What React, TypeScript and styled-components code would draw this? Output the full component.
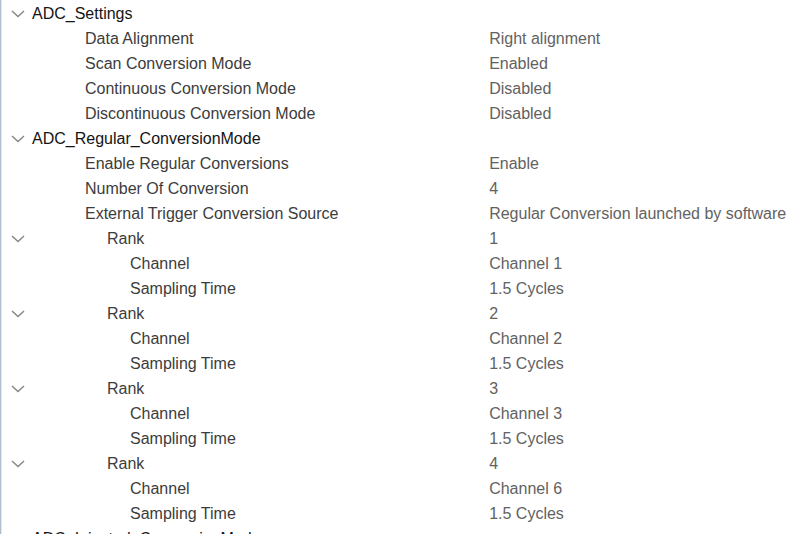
import React, { useState } from "react";
import styled, { createGlobalStyle } from "styled-components";

const GlobalStyle = createGlobalStyle`
  * { box-sizing: border-box; }
  body {
    margin: 0;
    background: #ffffff;
    font-family: "Liberation Sans", Arial, sans-serif;
    font-size: 16px;
    line-height: 25px;
  }
`;

const Panel = styled.main`
  height: 100vh;
  overflow: hidden;
  padding-top: 1px;
  border-left: 1px solid #b0bfcd;
  box-shadow: inset 1px 0 0 #e3e9ee;
`;

const Tree = styled.table`
  width: 100%;
  table-layout: fixed;
  border-collapse: collapse;
`;

const ToggleColumn = styled.col`
  width: 31px;
`;

const NameColumn = styled.col`
  width: 57%;
`;

const Row = styled.tr`
  height: 25px;
`;

const ToggleCell = styled.td`
  padding: 0 0 0 9px;
`;

const Toggle = styled.button<{ $open: boolean }>`
  display: flex;
  align-items: center;
  justify-content: center;
  width: 16px;
  height: 25px;
  padding: 0;
  border: 0;
  background: none;
  color: #858585;

  svg {
    transform: rotate(${({ $open }) => ($open ? "0deg" : "-90deg")});
  }
`;

const indents = [0, 53, 75, 98];

const NameCell = styled.th<{ $level: number }>`
  padding: 0 0 0 ${({ $level }) => indents[$level]}px;
  color: ${({ $level }) => ($level === 0 ? "#141414" : "#3c3c3c")};
  font-weight: 400;
  text-align: left;
  white-space: nowrap;
`;

const ValueCell = styled.td`
  padding: 0 0 0 4px;
  color: #626262;
  white-space: nowrap;
`;

type Item = { name: string; level: number; value?: string; children?: Item[] };

const rank = (n: string, channel: string): Item => ({
  name: "Rank",
  level: 2,
  value: n,
  children: [
    { name: "Channel", level: 3, value: channel },
    { name: "Sampling Time", level: 3, value: "1.5 Cycles" },
  ],
});

const settings: Item[] = [
  {
    name: "ADC_Settings",
    level: 0,
    children: [
      { name: "Data Alignment", level: 1, value: "Right alignment" },
      { name: "Scan Conversion Mode", level: 1, value: "Enabled" },
      { name: "Continuous Conversion Mode", level: 1, value: "Disabled" },
      { name: "Discontinuous Conversion Mode", level: 1, value: "Disabled" },
    ],
  },
  {
    name: "ADC_Regular_ConversionMode",
    level: 0,
    children: [
      { name: "Enable Regular Conversions", level: 1, value: "Enable" },
      { name: "Number Of Conversion", level: 1, value: "4" },
      {
        name: "External Trigger Conversion Source",
        level: 1,
        value: "Regular Conversion launched by software",
      },
      rank("1", "Channel 1"),
      rank("2", "Channel 2"),
      rank("3", "Channel 3"),
      rank("4", "Channel 6"),
    ],
  },
  { name: "ADC_Injected_ConversionMode", level: 0, children: [] },
];

function Node({ item }: { item: Item }) {
  const [open, setOpen] = useState(true);
  return (
    <>
      <Row>
        <ToggleCell>
          {item.children && (
            <Toggle
              type="button"
              $open={open}
              aria-expanded={open}
              aria-label={`${item.name} ${item.value ?? ""}`.trim()}
              onClick={() => setOpen(!open)}
            >
              <svg width="14" height="8" viewBox="0 0 14 8" fill="none" aria-hidden="true">
                <path d="M1 1 L7 6.5 L13 1" stroke="currentColor" strokeWidth="1.4" />
              </svg>
            </Toggle>
          )}
        </ToggleCell>
        <NameCell scope="row" $level={item.level}>
          {item.name}
        </NameCell>
        <ValueCell>{item.value}</ValueCell>
      </Row>
      {open && item.children?.map((child, i) => <Node key={i} item={child} />)}
    </>
  );
}

export default function App() {
  return (
    <>
      <GlobalStyle />
      <Panel>
        <Tree>
          <colgroup>
            <ToggleColumn />
            <NameColumn />
            <col />
          </colgroup>
          <tbody>
            {settings.map((item) => (
              <Node key={item.name} item={item} />
            ))}
          </tbody>
        </Tree>
      </Panel>
    </>
  );
}
